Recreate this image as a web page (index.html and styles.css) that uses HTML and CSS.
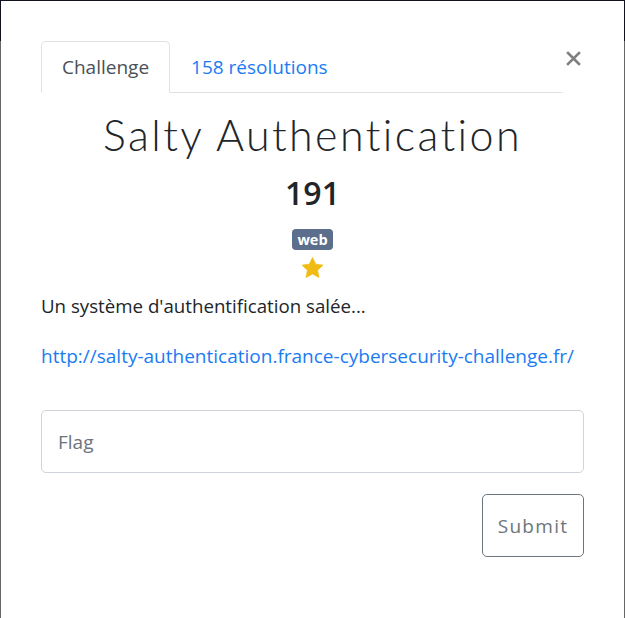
FILE: index.html
```html
<!DOCTYPE html>
<html lang="fr">
<head>
<meta charset="utf-8">
<title>Salty Authentication</title>
<link rel="stylesheet" href="styles.css">
</head>
<body>
<div class="modal">
  <div class="modal-body">
    <div class="top">
      <ul class="nav-tabs">
        <li class="nav-item"><a class="nav-link active" href="#challenge">Challenge</a></li>
        <li class="nav-item"><a class="nav-link" href="#solves">158 résolutions</a></li>
      </ul>
      <button class="close" type="button" aria-label="Close">
        <svg width="15" height="15" viewBox="0 0 15 15"><path d="M2 2 L13 13 M13 2 L2 13" stroke="#808080" stroke-width="2.6" stroke-linecap="square" fill="none"/></svg>
      </button>
    </div>
    <div class="pane">
      <h2 class="challenge-name">Salty Authentication</h2>
      <h3 class="challenge-value">191</h3>
      <div class="tags"><span class="badge">web</span></div>
      <div class="rating">
        <svg width="23" height="22" viewBox="0 0 24 23"><path d="M12 0.6 L15.3 7.5 L22.9 8.5 L17.3 13.8 L18.7 21.4 L12 17.7 L5.3 21.4 L6.7 13.8 L1.1 8.5 L8.7 7.5 Z" fill="#f0bc14" stroke="#f0bc14" stroke-width="0.8" stroke-linejoin="round"/></svg>
      </div>
      <p class="desc">Un système d'authentification salée...</p>
      <p class="desc link-line"><a class="link" href="#">http://salty-authentication.france-cybersecurity-challenge.fr/</a></p>
      <div class="submit-row">
        <input class="form-control" type="text" placeholder="Flag">
        <div class="actions"><button class="btn" type="button">Submit</button></div>
      </div>
    </div>
  </div>
</div>
</body>
</html>
```
FILE: styles.css
```css
html, body {
  margin: 0;
  padding: 0;
  height: 100%;
  overflow: hidden;
}
body {
  background: linear-gradient(to bottom, #10131f 0, #10131f 41px, #666666 41px, #666666 100%);
  font-family: "Open Sans", "Noto Sans", sans-serif;
  color: #212529;
}
.modal {
  width: 623px;
  height: 640px;
  margin: 1px 1px 0 1px;
  background: #fff;
}
.modal-body {
  padding: 40px 40px 40px 40px;
}
.top {
  display: flex;
  align-items: flex-start;
}
.nav-tabs {
  flex: 1;
  display: flex;
  list-style: none;
  margin: 0;
  padding: 0;
  border-bottom: 1px solid #dee2e6;
}
.nav-item {
  margin-bottom: -1px;
}
.nav-link {
  display: block;
  padding: 10px 20px;
  font-size: 19px;
  line-height: 30px;
  color: #1a7bf2;
  text-decoration: none;
  border: 1px solid transparent;
  border-top-left-radius: 5px;
  border-top-right-radius: 5px;
}
.nav-link.active {
  color: #495057;
  border-color: #dee2e6 #dee2e6 #fff;
  background: #fff;
}
.close {
  width: 21px;
  padding: 0;
  margin: 10px 0 0 0;
  border: none;
  background: none;
  display: flex;
  justify-content: center;
}
.pane {
  display: flex;
  flex-direction: column;
}
.challenge-name {
  margin: 14px 0 0 0;
  text-align: center;
  font-family: "Lato", sans-serif;
  font-weight: 300;
  font-size: 43px;
  line-height: 56px;
  letter-spacing: 2.4px;
  color: #212529;
}
.challenge-value {
  margin: 10px 0 0 0;
  text-align: center;
  font-weight: 600;
  font-size: 32px;
  line-height: 40px;
  color: #212529;
}
.tags {
  margin-top: 16px;
  text-align: center;
  line-height: 0;
}
.badge {
  display: inline-block;
  background: #5b6e8c;
  color: #fff;
  font-weight: 700;
  font-size: 14.5px;
  line-height: 21px;
  height: 21px;
  padding: 0 5px;
  border-radius: 4px;
}
.rating {
  margin-top: 7px;
  height: 22px;
  display: flex;
  justify-content: center;
}
.desc {
  margin: 13px 0 0 0;
  font-size: 18.7px;
  line-height: 28px;
}
.link-line {
  margin-top: 22px;
  font-size: 19px;
}
.link {
  color: #1a7bf2;
  text-decoration: none;
}
.submit-row {
  margin-top: 40px;
  display: flex;
  flex-direction: column;
}
.form-control {
  box-sizing: border-box;
  width: 100%;
  height: 63px;
  padding: 0 16px;
  font-family: "Open Sans", sans-serif;
  font-size: 19px;
  color: #495057;
  border: 1px solid #ced4da;
  border-radius: 5px;
  outline: none;
}
.form-control::placeholder {
  color: #6c757d;
}
.actions {
  margin-top: 21px;
  display: flex;
  justify-content: flex-end;
}
.btn {
  box-sizing: border-box;
  width: 102px;
  height: 63px;
  padding: 0;
  font-family: "Open Sans", sans-serif;
  font-size: 19px;
  letter-spacing: 1.3px;
  color: #6c757d;
  background: #fff;
  border: 1px solid #6c757d;
  border-radius: 5px;
}
```
